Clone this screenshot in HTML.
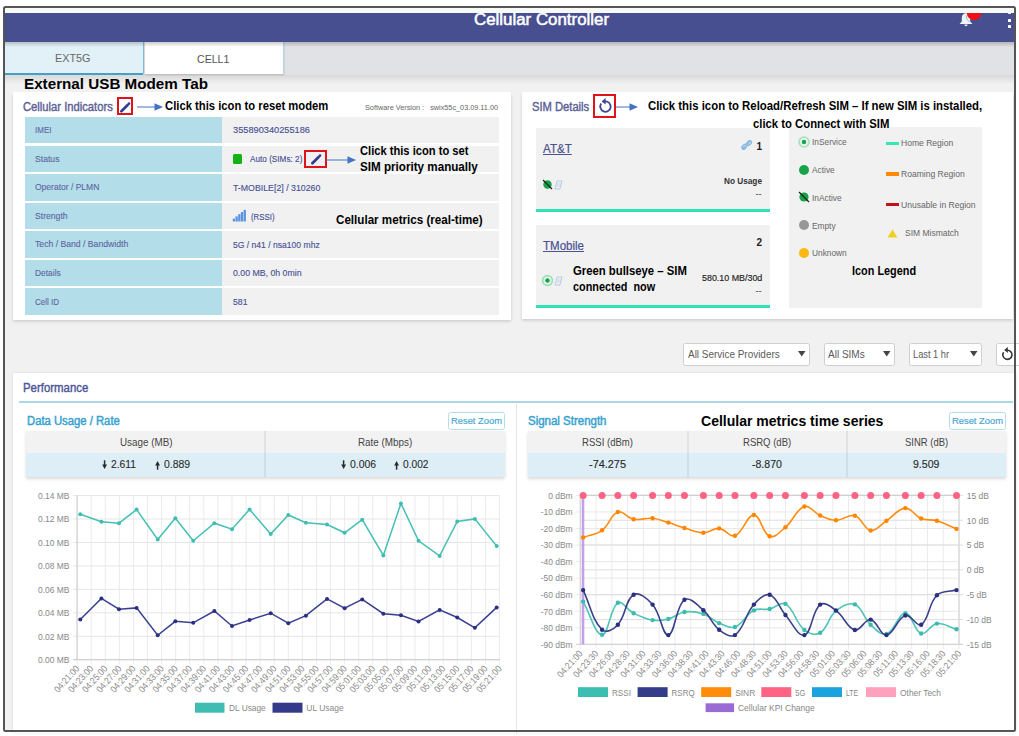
<!DOCTYPE html>
<html><head><meta charset="utf-8">
<style>
*{box-sizing:border-box;margin:0;padding:0}
html,body{width:1019px;height:736px;overflow:hidden;background:#fff;font-family:"Liberation Sans",sans-serif;position:relative}
.a{position:absolute}
.redbox{position:absolute;border:2px solid #e0121a}
.card{position:absolute;background:#fff;box-shadow:0 1.5px 3px rgba(0,0,0,0.16)}
.tx{position:absolute;white-space:nowrap;line-height:normal}
</style></head><body>
<div class="a" style="left:4px;top:7px;width:1011px;height:724px;background:#f1f1f1"></div>
<div class="a" style="left:5px;top:12.5px;width:1010px;height:29.8px;background:#474f91"></div>
<div class="tx" style="left:474.40px;top:11.36px;font-size:15.6px;color:#fff;font-weight:normal;transform:scaleX(1.0818);transform-origin:0 0;-webkit-text-stroke:0.5px #fff;">Cellular Controller</div>
<svg class="a" style="left:958px;top:11px" width="16" height="17" viewBox="0 0 16 17"><path d="M8 2.2 C5 2.2 3.8 4.6 3.8 7.4 L3.8 10.6 L1.6 13 L14.4 13 L12.2 10.6 L12.2 7.4 C12.2 4.6 11 2.2 8 2.2 Z" fill="#eaf6fa"/><path d="M6.4 13.6 A1.6 1.6 0 0 0 9.6 13.6 Z" fill="#eaf6fa"/></svg>
<svg class="a" style="left:964px;top:12.5px" width="20" height="9" viewBox="0 0 20 9"><circle cx="10" cy="0" r="7.2" fill="#f01010"/><path d="M2.2 2.6 A7.6 7.6 0 0 0 17.8 2.6" fill="none" stroke="#5b64a8" stroke-width="0.8" opacity="0.6"/></svg>
<div class="a" style="left:4px;top:7px;width:1011px;height:5.5px;background:#f8f9f9"></div>
<div class="a" style="left:1008px;top:18.5px;width:3px;height:3px;background:#fff;border-radius:0.6px"></div>
<div class="a" style="left:1008px;top:24.5px;width:3px;height:3px;background:#fff;border-radius:0.6px"></div>
<div class="a" style="left:1008px;top:12.5px;width:3px;height:1.5px;background:#e8e8f0"></div>
<div class="a" style="left:5px;top:42px;width:1010px;height:33px;background:#e1e2e6"></div>
<div class="a" style="left:5px;top:42px;width:138.5px;height:32.7px;background:#e2f1f8;border-bottom:2.6px solid #45a0c8;border-right:1.6px solid #7fbcd8;border-bottom-right-radius:2px"></div>
<div class="tx" style="left:55.30px;top:52.10px;font-size:11px;color:#666;font-weight:normal;transform:scaleX(0.9812);transform-origin:0 0;">EXT5G</div>
<div class="a" style="left:144.5px;top:42px;width:139px;height:32px;background:#fff;box-shadow:0 1px 1.5px rgba(0,0,0,0.2);border-right:1px solid #b5d3e2"></div>
<div class="tx" style="left:196.60px;top:53.10px;font-size:11px;color:#555;font-weight:normal;transform:scaleX(0.9631);transform-origin:0 0;">CELL1</div>
<div class="a" style="left:5px;top:42.3px;width:1010px;height:5px;background:linear-gradient(rgba(0,0,0,0.2),rgba(0,0,0,0))"></div>
<div class="a" style="left:5px;top:74.6px;width:1010px;height:9px;background:linear-gradient(rgba(0,0,0,0.1),rgba(0,0,0,0))"></div>
<div class="card" style="left:13px;top:92px;width:498px;height:228px"></div>
<div class="tx" style="left:23.00px;top:99.83px;font-size:12.3px;color:#5b6096;font-weight:normal;transform:scaleX(0.9124);transform-origin:0 0;-webkit-text-stroke:0.4px #5b6096;">Cellular Indicators</div>
<div class="a" style="left:25px;top:117.00px;width:197.3px;height:26.4px;background:#b2dde9"></div>
<div class="a" style="left:222.3px;top:117.00px;width:277px;height:26.4px;background:#f1f1f1"></div>
<div class="tx" style="left:35.20px;top:125.18px;font-size:8.8px;color:#5d66a0;font-weight:normal;transform:scaleX(0.9119);transform-origin:0 0;-webkit-text-stroke:0.1px #5d66a0;">IMEI</div>
<div class="tx" style="left:232.90px;top:124.44px;font-size:9.4px;color:#4a5296;font-weight:normal;transform:scaleX(0.9844);transform-origin:0 0;-webkit-text-stroke:0.15px #4a5296;">355890340255186</div>
<div class="a" style="left:25px;top:145.57px;width:197.3px;height:26.4px;background:#b2dde9"></div>
<div class="a" style="left:222.3px;top:145.57px;width:277px;height:26.4px;background:#f1f1f1"></div>
<div class="tx" style="left:35.20px;top:153.75px;font-size:8.8px;color:#5d66a0;font-weight:normal;transform:scaleX(0.9818);transform-origin:0 0;-webkit-text-stroke:0.1px #5d66a0;">Status</div>
<div class="a" style="left:25px;top:174.14px;width:197.3px;height:26.4px;background:#b2dde9"></div>
<div class="a" style="left:222.3px;top:174.14px;width:277px;height:26.4px;background:#f1f1f1"></div>
<div class="tx" style="left:35.20px;top:182.32px;font-size:8.8px;color:#5d66a0;font-weight:normal;transform:scaleX(0.9669);transform-origin:0 0;-webkit-text-stroke:0.1px #5d66a0;">Operator / PLMN</div>
<div class="tx" style="left:232.90px;top:181.58px;font-size:9.4px;color:#4a5296;font-weight:normal;transform:scaleX(0.9359);transform-origin:0 0;-webkit-text-stroke:0.15px #4a5296;">T-MOBILE[2] / 310260</div>
<div class="a" style="left:25px;top:202.71px;width:197.3px;height:26.4px;background:#b2dde9"></div>
<div class="a" style="left:222.3px;top:202.71px;width:277px;height:26.4px;background:#f1f1f1"></div>
<div class="tx" style="left:35.20px;top:210.89px;font-size:8.8px;color:#5d66a0;font-weight:normal;transform:scaleX(0.9800);transform-origin:0 0;-webkit-text-stroke:0.1px #5d66a0;">Strength</div>
<div class="a" style="left:25px;top:231.28px;width:197.3px;height:26.4px;background:#b2dde9"></div>
<div class="a" style="left:222.3px;top:231.28px;width:277px;height:26.4px;background:#f1f1f1"></div>
<div class="tx" style="left:35.20px;top:239.46px;font-size:8.8px;color:#5d66a0;font-weight:normal;transform:scaleX(0.9823);transform-origin:0 0;-webkit-text-stroke:0.1px #5d66a0;">Tech / Band / Bandwidth</div>
<div class="tx" style="left:232.90px;top:238.72px;font-size:9.4px;color:#4a5296;font-weight:normal;transform:scaleX(0.9140);transform-origin:0 0;-webkit-text-stroke:0.15px #4a5296;">5G / n41 / nsa100 mhz</div>
<div class="a" style="left:25px;top:259.85px;width:197.3px;height:26.4px;background:#b2dde9"></div>
<div class="a" style="left:222.3px;top:259.85px;width:277px;height:26.4px;background:#f1f1f1"></div>
<div class="tx" style="left:35.20px;top:268.03px;font-size:8.8px;color:#5d66a0;font-weight:normal;transform:scaleX(0.9557);transform-origin:0 0;-webkit-text-stroke:0.1px #5d66a0;">Details</div>
<div class="tx" style="left:232.90px;top:267.29px;font-size:9.4px;color:#4a5296;font-weight:normal;transform:scaleX(0.9322);transform-origin:0 0;-webkit-text-stroke:0.15px #4a5296;">0.00 MB, 0h 0min</div>
<div class="a" style="left:25px;top:288.42px;width:197.3px;height:26.4px;background:#b2dde9"></div>
<div class="a" style="left:222.3px;top:288.42px;width:277px;height:26.4px;background:#f1f1f1"></div>
<div class="tx" style="left:35.20px;top:296.60px;font-size:8.8px;color:#5d66a0;font-weight:normal;transform:scaleX(0.9127);transform-origin:0 0;-webkit-text-stroke:0.1px #5d66a0;">Cell ID</div>
<div class="tx" style="left:232.90px;top:295.86px;font-size:9.4px;color:#4a5296;font-weight:normal;transform:scaleX(0.9261);transform-origin:0 0;-webkit-text-stroke:0.15px #4a5296;">581</div>
<div class="redbox" style="left:116.9px;top:96.8px;width:16.5px;height:18.2px"></div>
<svg class="a" style="left:119px;top:100.5px" width="12" height="12" viewBox="0 0 12 12"><path d="M2.4 10.2 L8.4 4.2" stroke="#333d8f" stroke-width="2.7" stroke-linecap="round"/><path d="M9.5 3.1 L10.1 2.5" stroke="#333d8f" stroke-width="2.5" stroke-linecap="round"/></svg>
<svg class="a" style="left:137px;top:101.5px" width="26" height="10" viewBox="0 0 26 10"><line x1="0" y1="5" x2="18" y2="5" stroke="#4472c4" stroke-width="1"/><path d="M17.5 1.2 L26 5 L17.5 8.8 Z" fill="#4472c4"/></svg>
<div class="tx" style="left:364.70px;top:103.63px;font-size:6.3px;color:#666;font-weight:normal;transform:scaleX(1.1561);transform-origin:0 0;">Software Version :&nbsp;&nbsp; swix55c_03.09.11.00</div>
<div class="a" style="left:232.8px;top:154px;width:9.6px;height:9.8px;background:#14b214;border-radius:1.5px"></div>
<div class="tx" style="left:250.00px;top:153.26px;font-size:9.6px;color:#4a5296;font-weight:normal;transform:scaleX(0.8546);transform-origin:0 0;-webkit-text-stroke:0.15px #4a5296;">Auto (SIMs: 2)</div>
<div class="redbox" style="left:303.9px;top:149.5px;width:22.8px;height:18.2px"></div>
<svg class="a" style="left:309.5px;top:152.5px" width="12" height="12" viewBox="0 0 12 12"><path d="M2.4 10.2 L8.4 4.2" stroke="#333d8f" stroke-width="2.7" stroke-linecap="round"/><path d="M9.5 3.1 L10.1 2.5" stroke="#333d8f" stroke-width="2.5" stroke-linecap="round"/></svg>
<svg class="a" style="left:326px;top:155px" width="30" height="10" viewBox="0 0 30 10"><line x1="0" y1="5" x2="22" y2="5" stroke="#4472c4" stroke-width="1"/><path d="M21.5 1.2 L30 5 L21.5 8.8 Z" fill="#4472c4"/></svg>
<svg class="a" style="left:232px;top:209px" width="15" height="13" viewBox="0 0 15 13"><g fill="#5b94e0"><rect x="0.8" y="9.6" width="2.3" height="2.9"/><rect x="3.5" y="7.4" width="2.3" height="5.1"/><rect x="6.2" y="5.2" width="2.3" height="7.3"/><rect x="8.9" y="3" width="2.3" height="9.5"/><rect x="11.6" y="0.8" width="2.3" height="11.7"/></g></svg>
<div class="tx" style="left:250.50px;top:211.36px;font-size:9.6px;color:#4a5296;font-weight:normal;transform:scaleX(0.8165);transform-origin:0 0;-webkit-text-stroke:0.15px #4a5296;">(RSSI)</div>
<div class="card" style="left:521.5px;top:92px;width:491px;height:227px"></div>
<div class="tx" style="left:531.50px;top:99.83px;font-size:12.3px;color:#5b6096;font-weight:normal;transform:scaleX(0.9097);transform-origin:0 0;-webkit-text-stroke:0.4px #5b6096;">SIM Details</div>
<div class="redbox" style="left:593.2px;top:93.8px;width:23.3px;height:23.9px"></div>
<svg class="a" style="left:596px;top:97px" width="18" height="18" viewBox="0 0 18 18"><path d="M5.2 6.6 A5.2 5.2 0 1 0 9 4.4" fill="none" stroke="#3b4594" stroke-width="1.8"/><path d="M9.6 1 L9.6 7.6 L5.6 4.4 Z" fill="#3b4594"/></svg>
<svg class="a" style="left:616px;top:101.5px" width="22" height="10" viewBox="0 0 22 10"><line x1="0" y1="5" x2="14" y2="5" stroke="#4472c4" stroke-width="1"/><path d="M13.5 1.2 L22 5 L13.5 8.8 Z" fill="#4472c4"/></svg>
<div class="a" style="left:536px;top:128px;width:234px;height:84px;background:#f1f1f1;border-bottom:3px solid #30e3b5"></div>
<div class="tx" style="left:542.80px;top:142.40px;font-size:12px;color:#4a5090;font-weight:normal;transform:scaleX(0.9671);transform-origin:0 0;-webkit-text-stroke:0.2px #4a5090;text-decoration:underline">AT&amp;T</div>
<svg class="a" style="left:741px;top:140px" width="12" height="11" viewBox="0 0 12 11"><g fill="none" stroke="#8ab9e0" stroke-width="1.6"><path d="M1.8 8.6 L4.2 6.2 M6.2 4.2 L8.6 1.8"/><rect x="0.8" y="5.2" width="5" height="3.2" rx="1.6" transform="rotate(-45 3.3 6.8)"/><rect x="5.6" y="1.4" width="5" height="3.2" rx="1.6" transform="rotate(-45 8.1 3)"/></g></svg>
<div class="tx" style="left:756.50px;top:140.50px;font-size:10px;color:#222;font-weight:bold;">1</div>
<svg class="a" style="left:542px;top:179px" width="12" height="11" viewBox="0 0 12 11"><circle cx="5.5" cy="5.5" r="4.2" fill="#16a34a"/><line x1="1" y1="1" x2="10" y2="10" stroke="#222" stroke-width="1.2"/></svg>
<svg class="a" style="left:553px;top:180px" width="10" height="10" viewBox="0 0 10 10"><path d="M2 9 L4 1 L9 1 L7 9 Z" fill="none" stroke="#a9c4e0" stroke-width="0.8"/><path d="M3.5 6 L7.5 6 M4 4 L8 4" stroke="#a9c4e0" stroke-width="0.6"/></svg>
<div class="tx" style="left:724.30px;top:176.02px;font-size:9.2px;color:#333;font-weight:bold;transform:scaleX(0.8964);transform-origin:0 0;">No Usage</div>
<div class="tx" style="left:755.50px;top:189.40px;font-size:9px;color:#333;font-weight:normal;">--</div>
<div class="a" style="left:536px;top:224.5px;width:234px;height:83px;background:#f1f1f1;border-bottom:3px solid #30e3b5"></div>
<div class="tx" style="left:542.80px;top:238.80px;font-size:12px;color:#4a5090;font-weight:normal;transform:scaleX(0.9605);transform-origin:0 0;-webkit-text-stroke:0.2px #4a5090;text-decoration:underline">TMobile</div>
<div class="tx" style="left:756.50px;top:237.00px;font-size:10px;color:#222;font-weight:bold;">2</div>
<svg class="a" style="left:541px;top:274px" width="13" height="13" viewBox="0 0 13 13"><circle cx="6.5" cy="6.5" r="5.7" fill="#9fdcb6"/><circle cx="6.5" cy="6.5" r="4" fill="#e6f6ec"/><circle cx="6.5" cy="6.5" r="2.2" fill="#16a34a"/></svg>
<svg class="a" style="left:553px;top:276px" width="10" height="10" viewBox="0 0 10 10"><path d="M2 9 L4 1 L9 1 L7 9 Z" fill="none" stroke="#a9c4e0" stroke-width="0.8"/><path d="M3.5 6 L7.5 6 M4 4 L8 4" stroke="#a9c4e0" stroke-width="0.6"/></svg>
<div class="tx" style="left:702.00px;top:272.70px;font-size:9px;color:#222;font-weight:normal;transform:scaleX(0.9878);transform-origin:0 0;-webkit-text-stroke:0.15px #222;">580.10 MB/30d</div>
<div class="tx" style="left:755.50px;top:285.90px;font-size:9px;color:#333;font-weight:normal;">--</div>
<div class="a" style="left:788.5px;top:126.5px;width:193px;height:181.5px;background:#f1f1f1"></div>
<svg class="a" style="left:796.7px;top:134.9px" width="14" height="14" viewBox="0 0 14 14"><circle cx="7" cy="7" r="5.8" fill="#a6dfbd"/><circle cx="7" cy="7" r="4.2" fill="#e3f5ea"/><circle cx="7" cy="7" r="2.2" fill="#16a34a"/></svg>
<div class="tx" style="left:812.00px;top:137.10px;font-size:9px;color:#666;font-weight:normal;transform:scaleX(0.9250);transform-origin:0 0;">InService</div>
<svg class="a" style="left:796.7px;top:162.8px" width="14" height="14" viewBox="0 0 14 14"><circle cx="7" cy="7" r="5" fill="#16a34a"/></svg>
<div class="tx" style="left:812.00px;top:165.00px;font-size:9px;color:#666;font-weight:normal;transform:scaleX(0.9250);transform-origin:0 0;">Active</div>
<svg class="a" style="left:796.7px;top:190.4px" width="14" height="14" viewBox="0 0 14 14"><circle cx="7" cy="7" r="4.6" fill="#16a34a"/><line x1="2" y1="2" x2="12" y2="12" stroke="#222" stroke-width="1.2"/></svg>
<div class="tx" style="left:812.00px;top:192.60px;font-size:9px;color:#666;font-weight:normal;transform:scaleX(0.9250);transform-origin:0 0;">InActive</div>
<svg class="a" style="left:796.7px;top:218.3px" width="14" height="14" viewBox="0 0 14 14"><circle cx="7" cy="7" r="5" fill="#979797"/></svg>
<div class="tx" style="left:812.00px;top:220.50px;font-size:9px;color:#666;font-weight:normal;transform:scaleX(0.9250);transform-origin:0 0;">Empty</div>
<svg class="a" style="left:796.7px;top:246.1px" width="14" height="14" viewBox="0 0 14 14"><circle cx="7" cy="7" r="5" fill="#fcb912"/></svg>
<div class="tx" style="left:812.00px;top:248.30px;font-size:9px;color:#666;font-weight:normal;transform:scaleX(0.9250);transform-origin:0 0;">Unknown</div>
<div class="a" style="left:886px;top:141.55px;width:13px;height:3.3px;background:#33e8b8"></div>
<div class="tx" style="left:901.20px;top:138.40px;font-size:9px;color:#666;font-weight:normal;transform:scaleX(0.9500);transform-origin:0 0;">Home Region</div>
<div class="a" style="left:886px;top:172.25px;width:13px;height:3.3px;background:#ff8a00"></div>
<div class="tx" style="left:901.20px;top:169.10px;font-size:9px;color:#666;font-weight:normal;transform:scaleX(0.9500);transform-origin:0 0;">Roaming Region</div>
<div class="a" style="left:886px;top:202.85px;width:13px;height:3.3px;background:#c0111f"></div>
<div class="tx" style="left:901.20px;top:199.70px;font-size:9px;color:#666;font-weight:normal;transform:scaleX(0.9500);transform-origin:0 0;">Unusable in Region</div>
<svg class="a" style="left:886.5px;top:229px" width="11" height="9" viewBox="0 0 11 9"><path d="M5.5 0.5 L10.5 8.5 L0.5 8.5 Z" fill="#f2cf1c"/></svg>
<div class="tx" style="left:904.90px;top:228.40px;font-size:9px;color:#666;font-weight:normal;transform:scaleX(0.9436);transform-origin:0 0;">SIM Mismatch</div>
<div class="a" style="left:683px;top:342.5px;width:126.5px;height:23px;background:#fff;border:1px solid #cfcfcf;border-radius:2.5px"></div>
<div class="tx" style="left:687.60px;top:348.25px;font-size:10.5px;color:#5a5a5a;font-weight:normal;transform:scaleX(0.9466);transform-origin:0 0;">All Service Providers</div>
<svg class="a" style="left:797.5px;top:351.2px" width="8" height="6" viewBox="0 0 8 6"><path d="M0 0 L7.5 0 L3.75 5.4 Z" fill="#444"/></svg>
<div class="a" style="left:823.5px;top:342.5px;width:71.0px;height:23px;background:#fff;border:1px solid #cfcfcf;border-radius:2.5px"></div>
<div class="tx" style="left:827.90px;top:348.25px;font-size:10.5px;color:#5a5a5a;font-weight:normal;transform:scaleX(0.9529);transform-origin:0 0;">All SIMs</div>
<svg class="a" style="left:882.5px;top:351.2px" width="8" height="6" viewBox="0 0 8 6"><path d="M0 0 L7.5 0 L3.75 5.4 Z" fill="#444"/></svg>
<div class="a" style="left:908.5px;top:342.5px;width:73.0px;height:23px;background:#fff;border:1px solid #cfcfcf;border-radius:2.5px"></div>
<div class="tx" style="left:913.00px;top:348.25px;font-size:10.5px;color:#5a5a5a;font-weight:normal;transform:scaleX(0.8811);transform-origin:0 0;">Last 1 hr</div>
<svg class="a" style="left:969.5px;top:351.2px" width="8" height="6" viewBox="0 0 8 6"><path d="M0 0 L7.5 0 L3.75 5.4 Z" fill="#444"/></svg>
<div class="a" style="left:995.5px;top:342.5px;width:30px;height:23px;background:#fff;border:1px solid #cfcfcf;border-radius:2.5px"></div>
<svg class="a" style="left:1000px;top:346px" width="14" height="15" viewBox="0 0 14 15"><path d="M3.6 6.2 A4.6 4.6 0 1 0 7.2 4.2" fill="none" stroke="#333" stroke-width="1.6"/><path d="M7.8 1 L7.8 7 L4.2 4.1 Z" fill="#333"/></svg>
<div class="a" style="left:13px;top:372.5px;width:1003px;height:360px;background:#fff;box-shadow:0 0 2px rgba(0,0,0,0.12)"></div>
<div class="tx" style="left:22.80px;top:381.15px;font-size:12.5px;color:#4d559a;font-weight:normal;transform:scaleX(0.9125);transform-origin:0 0;-webkit-text-stroke:0.4px #4d559a;">Performance</div>
<div class="a" style="left:19px;top:401px;width:993.5px;height:1.6px;background:#aad6e6"></div>
<div class="a" style="left:516.3px;top:404px;width:1px;height:330px;background:#e4e4e4"></div>
<div class="tx" style="left:26.60px;top:414.10px;font-size:12px;color:#35a1cf;font-weight:normal;transform:scaleX(0.9400);transform-origin:0 0;-webkit-text-stroke:0.45px #35a1cf;">Data Usage / Rate</div>
<div class="a" style="left:447.5px;top:411.8px;width:57px;height:18.6px;border:1px solid #b7dcec;border-radius:2.5px;background:#fff"></div>
<div class="tx" style="left:450.50px;top:415.45px;font-size:9.5px;color:#4aa7d4;font-weight:normal;transform:scaleX(0.9855);transform-origin:0 0;-webkit-text-stroke:0.2px #4aa7d4;">Reset Zoom</div>
<div class="tx" style="left:528.10px;top:414.30px;font-size:12px;color:#35a1cf;font-weight:normal;transform:scaleX(0.9566);transform-origin:0 0;-webkit-text-stroke:0.45px #35a1cf;">Signal Strength</div>
<div class="a" style="left:949px;top:411.8px;width:57px;height:18.6px;border:1px solid #b7dcec;border-radius:2.5px;background:#fff"></div>
<div class="tx" style="left:952.00px;top:415.45px;font-size:9.5px;color:#4aa7d4;font-weight:normal;transform:scaleX(0.9855);transform-origin:0 0;-webkit-text-stroke:0.2px #4aa7d4;">Reset Zoom</div>
<div class="a" style="left:25.5px;top:430.5px;width:479px;height:46.5px;box-shadow:0 2px 3px rgba(0,0,0,0.15)"></div>
<div class="a" style="left:25.5px;top:430.5px;width:479px;height:22.3px;background:#f2f2f2"></div>
<div class="a" style="left:25.5px;top:452.8px;width:479px;height:24.2px;background:#ddeef6"></div>
<div class="a" style="left:264px;top:430.5px;width:2px;height:46.5px;background:linear-gradient(90deg,rgba(0,0,0,0.03),rgba(0,0,0,0.10),rgba(0,0,0,0.03))"></div>
<div class="tx" style="left:119.70px;top:436.05px;font-size:10.5px;color:#444;font-weight:normal;transform:scaleX(0.9372);transform-origin:0 0;">Usage (MB)</div>
<div class="tx" style="left:357.70px;top:436.05px;font-size:10.5px;color:#444;font-weight:normal;transform:scaleX(0.9383);transform-origin:0 0;">Rate (Mbps)</div>
<svg class="a" style="left:102px;top:460.1px" width="5.2" height="9" viewBox="0 0 5.2 9"><path d="M2.6 0.3 L2.6 5" stroke="#2a2a2a" stroke-width="1.5"/><path d="M0.2 4.6 L5 4.6 L2.6 9 Z" fill="#2a2a2a"/></svg>
<div class="tx" style="left:111.10px;top:458.24px;font-size:11.4px;color:#2a2a2a;font-weight:normal;transform:scaleX(0.9071);transform-origin:0 0;-webkit-text-stroke:0.1px #2a2a2a;">2.611</div>
<svg class="a" style="left:155px;top:460.9px" width="5.2" height="9" viewBox="0 0 5.2 9"><path d="M2.6 8.7 L2.6 4" stroke="#2a2a2a" stroke-width="1.5"/><path d="M0.2 4.4 L5 4.4 L2.6 0 Z" fill="#2a2a2a"/></svg>
<div class="tx" style="left:164.20px;top:458.24px;font-size:11.4px;color:#2a2a2a;font-weight:normal;transform:scaleX(0.9188);transform-origin:0 0;-webkit-text-stroke:0.1px #2a2a2a;">0.889</div>
<svg class="a" style="left:340.6px;top:460.1px" width="5.2" height="9" viewBox="0 0 5.2 9"><path d="M2.6 0.3 L2.6 5" stroke="#2a2a2a" stroke-width="1.5"/><path d="M0.2 4.6 L5 4.6 L2.6 9 Z" fill="#2a2a2a"/></svg>
<div class="tx" style="left:349.80px;top:458.24px;font-size:11.4px;color:#2a2a2a;font-weight:normal;transform:scaleX(0.9153);transform-origin:0 0;-webkit-text-stroke:0.1px #2a2a2a;">0.006</div>
<svg class="a" style="left:394.2px;top:460.9px" width="5.2" height="9" viewBox="0 0 5.2 9"><path d="M2.6 8.7 L2.6 4" stroke="#2a2a2a" stroke-width="1.5"/><path d="M0.2 4.4 L5 4.4 L2.6 0 Z" fill="#2a2a2a"/></svg>
<div class="tx" style="left:403.40px;top:458.24px;font-size:11.4px;color:#2a2a2a;font-weight:normal;transform:scaleX(0.8942);transform-origin:0 0;-webkit-text-stroke:0.1px #2a2a2a;">0.002</div>
<div class="a" style="left:528px;top:430.5px;width:478px;height:46.5px;box-shadow:0 2px 3px rgba(0,0,0,0.15)"></div>
<div class="a" style="left:528px;top:430.5px;width:478px;height:22.7px;background:#f2f2f2"></div>
<div class="a" style="left:528px;top:453.2px;width:478px;height:23.8px;background:#ddeef6"></div>
<div class="a" style="left:686.6px;top:430.5px;width:2px;height:46.5px;background:linear-gradient(90deg,rgba(0,0,0,0.03),rgba(0,0,0,0.10),rgba(0,0,0,0.03))"></div>
<div class="a" style="left:845.6px;top:430.5px;width:2px;height:46.5px;background:linear-gradient(90deg,rgba(0,0,0,0.03),rgba(0,0,0,0.10),rgba(0,0,0,0.03))"></div>
<div class="tx" style="left:582.00px;top:435.85px;font-size:10.5px;color:#444;font-weight:normal;transform:scaleX(0.9105);transform-origin:0 0;">RSSI (dBm)</div>
<div class="tx" style="left:743.00px;top:435.85px;font-size:10.5px;color:#444;font-weight:normal;transform:scaleX(0.9078);transform-origin:0 0;">RSRQ (dB)</div>
<div class="tx" style="left:904.80px;top:435.85px;font-size:10.5px;color:#444;font-weight:normal;transform:scaleX(0.9008);transform-origin:0 0;">SINR (dB)</div>
<div class="tx" style="left:589.40px;top:458.40px;font-size:11px;color:#2a2a2a;font-weight:normal;transform:scaleX(0.9916);transform-origin:0 0;-webkit-text-stroke:0.15px #2a2a2a;">-74.275</div>
<div class="tx" style="left:752.40px;top:458.40px;font-size:11px;color:#2a2a2a;font-weight:normal;transform:scaleX(0.9582);transform-origin:0 0;-webkit-text-stroke:0.15px #2a2a2a;">-8.870</div>
<div class="tx" style="left:913.20px;top:458.40px;font-size:11px;color:#2a2a2a;font-weight:normal;transform:scaleX(0.9589);transform-origin:0 0;-webkit-text-stroke:0.15px #2a2a2a;">9.509</div>
<!--CHARTS-->
<svg class="a" style="left:0;top:0" width="1019" height="736" viewBox="0 0 1019 736" font-family="Liberation Sans, sans-serif">
<line x1="77.1" y1="495.6" x2="77.1" y2="664.68" stroke="#ebebeb" stroke-width="1"/>
<line x1="91.18" y1="495.6" x2="91.18" y2="664.68" stroke="#ebebeb" stroke-width="1"/>
<line x1="105.26" y1="495.6" x2="105.26" y2="664.68" stroke="#ebebeb" stroke-width="1"/>
<line x1="119.34" y1="495.6" x2="119.34" y2="664.68" stroke="#ebebeb" stroke-width="1"/>
<line x1="133.42" y1="495.6" x2="133.42" y2="664.68" stroke="#ebebeb" stroke-width="1"/>
<line x1="147.5" y1="495.6" x2="147.5" y2="664.68" stroke="#ebebeb" stroke-width="1"/>
<line x1="161.58" y1="495.6" x2="161.58" y2="664.68" stroke="#ebebeb" stroke-width="1"/>
<line x1="175.66" y1="495.6" x2="175.66" y2="664.68" stroke="#ebebeb" stroke-width="1"/>
<line x1="189.74" y1="495.6" x2="189.74" y2="664.68" stroke="#ebebeb" stroke-width="1"/>
<line x1="203.82" y1="495.6" x2="203.82" y2="664.68" stroke="#ebebeb" stroke-width="1"/>
<line x1="217.9" y1="495.6" x2="217.9" y2="664.68" stroke="#ebebeb" stroke-width="1"/>
<line x1="231.98" y1="495.6" x2="231.98" y2="664.68" stroke="#ebebeb" stroke-width="1"/>
<line x1="246.06" y1="495.6" x2="246.06" y2="664.68" stroke="#ebebeb" stroke-width="1"/>
<line x1="260.14" y1="495.6" x2="260.14" y2="664.68" stroke="#ebebeb" stroke-width="1"/>
<line x1="274.22" y1="495.6" x2="274.22" y2="664.68" stroke="#ebebeb" stroke-width="1"/>
<line x1="288.3" y1="495.6" x2="288.3" y2="664.68" stroke="#ebebeb" stroke-width="1"/>
<line x1="302.38" y1="495.6" x2="302.38" y2="664.68" stroke="#ebebeb" stroke-width="1"/>
<line x1="316.46" y1="495.6" x2="316.46" y2="664.68" stroke="#ebebeb" stroke-width="1"/>
<line x1="330.54" y1="495.6" x2="330.54" y2="664.68" stroke="#ebebeb" stroke-width="1"/>
<line x1="344.62" y1="495.6" x2="344.62" y2="664.68" stroke="#ebebeb" stroke-width="1"/>
<line x1="358.7" y1="495.6" x2="358.7" y2="664.68" stroke="#ebebeb" stroke-width="1"/>
<line x1="372.78" y1="495.6" x2="372.78" y2="664.68" stroke="#ebebeb" stroke-width="1"/>
<line x1="386.86" y1="495.6" x2="386.86" y2="664.68" stroke="#ebebeb" stroke-width="1"/>
<line x1="400.94" y1="495.6" x2="400.94" y2="664.68" stroke="#ebebeb" stroke-width="1"/>
<line x1="415.02" y1="495.6" x2="415.02" y2="664.68" stroke="#ebebeb" stroke-width="1"/>
<line x1="429.1" y1="495.6" x2="429.1" y2="664.68" stroke="#ebebeb" stroke-width="1"/>
<line x1="443.18" y1="495.6" x2="443.18" y2="664.68" stroke="#ebebeb" stroke-width="1"/>
<line x1="457.26" y1="495.6" x2="457.26" y2="664.68" stroke="#ebebeb" stroke-width="1"/>
<line x1="471.34" y1="495.6" x2="471.34" y2="664.68" stroke="#ebebeb" stroke-width="1"/>
<line x1="485.42" y1="495.6" x2="485.42" y2="664.68" stroke="#ebebeb" stroke-width="1"/>
<line x1="499.5" y1="495.6" x2="499.5" y2="664.68" stroke="#ebebeb" stroke-width="1"/>
<line x1="73.1" y1="495.6" x2="499.5" y2="495.6" stroke="#e6e6e6" stroke-width="1"/>
<line x1="73.1" y1="519.04" x2="499.5" y2="519.04" stroke="#e6e6e6" stroke-width="1"/>
<line x1="73.1" y1="542.48" x2="499.5" y2="542.48" stroke="#e6e6e6" stroke-width="1"/>
<line x1="73.1" y1="565.92" x2="499.5" y2="565.92" stroke="#e6e6e6" stroke-width="1"/>
<line x1="73.1" y1="589.36" x2="499.5" y2="589.36" stroke="#e6e6e6" stroke-width="1"/>
<line x1="73.1" y1="612.8" x2="499.5" y2="612.8" stroke="#e6e6e6" stroke-width="1"/>
<line x1="73.1" y1="636.24" x2="499.5" y2="636.24" stroke="#e6e6e6" stroke-width="1"/>
<line x1="73.1" y1="659.68" x2="499.5" y2="659.68" stroke="#e6e6e6" stroke-width="1"/>
<line x1="77.1" y1="495.6" x2="77.1" y2="659.68" stroke="#cfcfcf" stroke-width="1.2"/>
<line x1="73.1" y1="659.68" x2="499.5" y2="659.68" stroke="#cfcfcf" stroke-width="1.2"/>
<text transform="translate(69.5 498.9) scale(0.91 1)" font-size="9.3" fill="#888" text-anchor="end">0.14 MB</text>
<text transform="translate(69.5 522.34) scale(0.91 1)" font-size="9.3" fill="#888" text-anchor="end">0.12 MB</text>
<text transform="translate(69.5 545.78) scale(0.91 1)" font-size="9.3" fill="#888" text-anchor="end">0.10 MB</text>
<text transform="translate(69.5 569.22) scale(0.91 1)" font-size="9.3" fill="#888" text-anchor="end">0.08 MB</text>
<text transform="translate(69.5 592.66) scale(0.91 1)" font-size="9.3" fill="#888" text-anchor="end">0.06 MB</text>
<text transform="translate(69.5 616.1) scale(0.91 1)" font-size="9.3" fill="#888" text-anchor="end">0.04 MB</text>
<text transform="translate(69.5 639.54) scale(0.91 1)" font-size="9.3" fill="#888" text-anchor="end">0.02 MB</text>
<text transform="translate(69.5 662.98) scale(0.91 1)" font-size="9.3" fill="#888" text-anchor="end">0.00 MB</text>
<text transform="translate(79.9 669) rotate(-48) scale(0.88 1)" font-size="9.5" fill="#888" text-anchor="end">04:21:00</text>
<text transform="translate(93.98 669) rotate(-48) scale(0.88 1)" font-size="9.5" fill="#888" text-anchor="end">04:23:00</text>
<text transform="translate(108.06 669) rotate(-48) scale(0.88 1)" font-size="9.5" fill="#888" text-anchor="end">04:25:00</text>
<text transform="translate(122.14 669) rotate(-48) scale(0.88 1)" font-size="9.5" fill="#888" text-anchor="end">04:27:00</text>
<text transform="translate(136.22 669) rotate(-48) scale(0.88 1)" font-size="9.5" fill="#888" text-anchor="end">04:29:00</text>
<text transform="translate(150.3 669) rotate(-48) scale(0.88 1)" font-size="9.5" fill="#888" text-anchor="end">04:31:00</text>
<text transform="translate(164.38 669) rotate(-48) scale(0.88 1)" font-size="9.5" fill="#888" text-anchor="end">04:33:00</text>
<text transform="translate(178.46 669) rotate(-48) scale(0.88 1)" font-size="9.5" fill="#888" text-anchor="end">04:35:00</text>
<text transform="translate(192.54 669) rotate(-48) scale(0.88 1)" font-size="9.5" fill="#888" text-anchor="end">04:37:00</text>
<text transform="translate(206.62 669) rotate(-48) scale(0.88 1)" font-size="9.5" fill="#888" text-anchor="end">04:39:00</text>
<text transform="translate(220.7 669) rotate(-48) scale(0.88 1)" font-size="9.5" fill="#888" text-anchor="end">04:41:00</text>
<text transform="translate(234.78 669) rotate(-48) scale(0.88 1)" font-size="9.5" fill="#888" text-anchor="end">04:43:00</text>
<text transform="translate(248.86 669) rotate(-48) scale(0.88 1)" font-size="9.5" fill="#888" text-anchor="end">04:45:00</text>
<text transform="translate(262.94 669) rotate(-48) scale(0.88 1)" font-size="9.5" fill="#888" text-anchor="end">04:47:00</text>
<text transform="translate(277.02 669) rotate(-48) scale(0.88 1)" font-size="9.5" fill="#888" text-anchor="end">04:49:00</text>
<text transform="translate(291.1 669) rotate(-48) scale(0.88 1)" font-size="9.5" fill="#888" text-anchor="end">04:51:00</text>
<text transform="translate(305.18 669) rotate(-48) scale(0.88 1)" font-size="9.5" fill="#888" text-anchor="end">04:53:00</text>
<text transform="translate(319.26 669) rotate(-48) scale(0.88 1)" font-size="9.5" fill="#888" text-anchor="end">04:55:00</text>
<text transform="translate(333.34 669) rotate(-48) scale(0.88 1)" font-size="9.5" fill="#888" text-anchor="end">04:57:00</text>
<text transform="translate(347.42 669) rotate(-48) scale(0.88 1)" font-size="9.5" fill="#888" text-anchor="end">04:59:00</text>
<text transform="translate(361.5 669) rotate(-48) scale(0.88 1)" font-size="9.5" fill="#888" text-anchor="end">05:01:00</text>
<text transform="translate(375.58 669) rotate(-48) scale(0.88 1)" font-size="9.5" fill="#888" text-anchor="end">05:03:00</text>
<text transform="translate(389.66 669) rotate(-48) scale(0.88 1)" font-size="9.5" fill="#888" text-anchor="end">05:05:00</text>
<text transform="translate(403.74 669) rotate(-48) scale(0.88 1)" font-size="9.5" fill="#888" text-anchor="end">05:07:00</text>
<text transform="translate(417.82 669) rotate(-48) scale(0.88 1)" font-size="9.5" fill="#888" text-anchor="end">05:09:00</text>
<text transform="translate(431.9 669) rotate(-48) scale(0.88 1)" font-size="9.5" fill="#888" text-anchor="end">05:11:00</text>
<text transform="translate(445.98 669) rotate(-48) scale(0.88 1)" font-size="9.5" fill="#888" text-anchor="end">05:13:00</text>
<text transform="translate(460.06 669) rotate(-48) scale(0.88 1)" font-size="9.5" fill="#888" text-anchor="end">05:15:00</text>
<text transform="translate(474.14 669) rotate(-48) scale(0.88 1)" font-size="9.5" fill="#888" text-anchor="end">05:17:00</text>
<text transform="translate(488.22 669) rotate(-48) scale(0.88 1)" font-size="9.5" fill="#888" text-anchor="end">05:19:00</text>
<text transform="translate(502.3 669) rotate(-48) scale(0.88 1)" font-size="9.5" fill="#888" text-anchor="end">05:21:00</text>
<polyline points="80.27,514.2 101.39,521.7 118.99,523.2 136.59,509.6 157.71,539.5 175.31,518.2 193.26,540.8 214.38,523.2 231.98,529.2 249.58,509.4 270.7,534 288.3,515 305.9,522.7 327.02,524.5 344.62,532.8 362.22,519.7 383.34,555.4 400.94,503.4 418.54,540.8 439.66,555.9 457.26,521.5 474.86,518.9 496.68,546.1" fill="none" stroke="#45c0b5" stroke-width="1.5"/>
<circle cx="80.27" cy="514.2" r="2" fill="#3fbdb2"/>
<circle cx="101.39" cy="521.7" r="2" fill="#3fbdb2"/>
<circle cx="118.99" cy="523.2" r="2" fill="#3fbdb2"/>
<circle cx="136.59" cy="509.6" r="2" fill="#3fbdb2"/>
<circle cx="157.71" cy="539.5" r="2" fill="#3fbdb2"/>
<circle cx="175.31" cy="518.2" r="2" fill="#3fbdb2"/>
<circle cx="193.26" cy="540.8" r="2" fill="#3fbdb2"/>
<circle cx="214.38" cy="523.2" r="2" fill="#3fbdb2"/>
<circle cx="231.98" cy="529.2" r="2" fill="#3fbdb2"/>
<circle cx="249.58" cy="509.4" r="2" fill="#3fbdb2"/>
<circle cx="270.7" cy="534" r="2" fill="#3fbdb2"/>
<circle cx="288.3" cy="515" r="2" fill="#3fbdb2"/>
<circle cx="305.9" cy="522.7" r="2" fill="#3fbdb2"/>
<circle cx="327.02" cy="524.5" r="2" fill="#3fbdb2"/>
<circle cx="344.62" cy="532.8" r="2" fill="#3fbdb2"/>
<circle cx="362.22" cy="519.7" r="2" fill="#3fbdb2"/>
<circle cx="383.34" cy="555.4" r="2" fill="#3fbdb2"/>
<circle cx="400.94" cy="503.4" r="2" fill="#3fbdb2"/>
<circle cx="418.54" cy="540.8" r="2" fill="#3fbdb2"/>
<circle cx="439.66" cy="555.9" r="2" fill="#3fbdb2"/>
<circle cx="457.26" cy="521.5" r="2" fill="#3fbdb2"/>
<circle cx="474.86" cy="518.9" r="2" fill="#3fbdb2"/>
<circle cx="496.68" cy="546.1" r="2" fill="#3fbdb2"/>
<polyline points="80.27,619.5 101.39,598.4 118.99,609.2 136.59,607.9 157.71,635.3 175.31,621.3 193.26,622.8 214.38,611 231.98,626 249.58,620 270.7,613.2 288.3,623.2 305.9,615.7 327.02,598.9 344.62,608.2 362.22,599.4 383.34,613.7 400.94,615.2 418.54,621.5 439.66,609.9 457.26,617.5 474.86,627.8 496.68,607.4" fill="none" stroke="#3a4090" stroke-width="1.5"/>
<circle cx="80.27" cy="619.5" r="2" fill="#2a2f80"/>
<circle cx="101.39" cy="598.4" r="2" fill="#2a2f80"/>
<circle cx="118.99" cy="609.2" r="2" fill="#2a2f80"/>
<circle cx="136.59" cy="607.9" r="2" fill="#2a2f80"/>
<circle cx="157.71" cy="635.3" r="2" fill="#2a2f80"/>
<circle cx="175.31" cy="621.3" r="2" fill="#2a2f80"/>
<circle cx="193.26" cy="622.8" r="2" fill="#2a2f80"/>
<circle cx="214.38" cy="611" r="2" fill="#2a2f80"/>
<circle cx="231.98" cy="626" r="2" fill="#2a2f80"/>
<circle cx="249.58" cy="620" r="2" fill="#2a2f80"/>
<circle cx="270.7" cy="613.2" r="2" fill="#2a2f80"/>
<circle cx="288.3" cy="623.2" r="2" fill="#2a2f80"/>
<circle cx="305.9" cy="615.7" r="2" fill="#2a2f80"/>
<circle cx="327.02" cy="598.9" r="2" fill="#2a2f80"/>
<circle cx="344.62" cy="608.2" r="2" fill="#2a2f80"/>
<circle cx="362.22" cy="599.4" r="2" fill="#2a2f80"/>
<circle cx="383.34" cy="613.7" r="2" fill="#2a2f80"/>
<circle cx="400.94" cy="615.2" r="2" fill="#2a2f80"/>
<circle cx="418.54" cy="621.5" r="2" fill="#2a2f80"/>
<circle cx="439.66" cy="609.9" r="2" fill="#2a2f80"/>
<circle cx="457.26" cy="617.5" r="2" fill="#2a2f80"/>
<circle cx="474.86" cy="627.8" r="2" fill="#2a2f80"/>
<circle cx="496.68" cy="607.4" r="2" fill="#2a2f80"/>
<rect x="195" y="702.7" width="29.5" height="10" fill="#3fbdb2"/>
<text x="229" y="711.2" font-size="9.5" fill="#888" textLength="36.7" lengthAdjust="spacingAndGlyphs">DL Usage</text>
<rect x="272.5" y="702.7" width="30" height="10" fill="#343a8a"/>
<text x="306.3" y="711.2" font-size="9.5" fill="#888" textLength="37.3" lengthAdjust="spacingAndGlyphs">UL Usage</text>
<line x1="580.3" y1="495.4" x2="580.3" y2="649.35" stroke="#ebebeb" stroke-width="1"/>
<line x1="596.08" y1="495.4" x2="596.08" y2="649.35" stroke="#ebebeb" stroke-width="1"/>
<line x1="611.86" y1="495.4" x2="611.86" y2="649.35" stroke="#ebebeb" stroke-width="1"/>
<line x1="627.64" y1="495.4" x2="627.64" y2="649.35" stroke="#ebebeb" stroke-width="1"/>
<line x1="643.42" y1="495.4" x2="643.42" y2="649.35" stroke="#ebebeb" stroke-width="1"/>
<line x1="659.2" y1="495.4" x2="659.2" y2="649.35" stroke="#ebebeb" stroke-width="1"/>
<line x1="674.98" y1="495.4" x2="674.98" y2="649.35" stroke="#ebebeb" stroke-width="1"/>
<line x1="690.76" y1="495.4" x2="690.76" y2="649.35" stroke="#ebebeb" stroke-width="1"/>
<line x1="706.54" y1="495.4" x2="706.54" y2="649.35" stroke="#ebebeb" stroke-width="1"/>
<line x1="722.32" y1="495.4" x2="722.32" y2="649.35" stroke="#ebebeb" stroke-width="1"/>
<line x1="738.1" y1="495.4" x2="738.1" y2="649.35" stroke="#ebebeb" stroke-width="1"/>
<line x1="753.88" y1="495.4" x2="753.88" y2="649.35" stroke="#ebebeb" stroke-width="1"/>
<line x1="769.66" y1="495.4" x2="769.66" y2="649.35" stroke="#ebebeb" stroke-width="1"/>
<line x1="785.44" y1="495.4" x2="785.44" y2="649.35" stroke="#ebebeb" stroke-width="1"/>
<line x1="801.22" y1="495.4" x2="801.22" y2="649.35" stroke="#ebebeb" stroke-width="1"/>
<line x1="817" y1="495.4" x2="817" y2="649.35" stroke="#ebebeb" stroke-width="1"/>
<line x1="832.78" y1="495.4" x2="832.78" y2="649.35" stroke="#ebebeb" stroke-width="1"/>
<line x1="848.56" y1="495.4" x2="848.56" y2="649.35" stroke="#ebebeb" stroke-width="1"/>
<line x1="864.34" y1="495.4" x2="864.34" y2="649.35" stroke="#ebebeb" stroke-width="1"/>
<line x1="880.12" y1="495.4" x2="880.12" y2="649.35" stroke="#ebebeb" stroke-width="1"/>
<line x1="895.9" y1="495.4" x2="895.9" y2="649.35" stroke="#ebebeb" stroke-width="1"/>
<line x1="911.68" y1="495.4" x2="911.68" y2="649.35" stroke="#ebebeb" stroke-width="1"/>
<line x1="927.46" y1="495.4" x2="927.46" y2="649.35" stroke="#ebebeb" stroke-width="1"/>
<line x1="943.24" y1="495.4" x2="943.24" y2="649.35" stroke="#ebebeb" stroke-width="1"/>
<line x1="959.02" y1="495.4" x2="959.02" y2="649.35" stroke="#ebebeb" stroke-width="1"/>
<line x1="576.3" y1="495.4" x2="959.02" y2="495.4" stroke="#e8e8e8" stroke-width="1"/>
<line x1="576.3" y1="511.95" x2="959.02" y2="511.95" stroke="#e8e8e8" stroke-width="1"/>
<line x1="576.3" y1="528.5" x2="959.02" y2="528.5" stroke="#e8e8e8" stroke-width="1"/>
<line x1="576.3" y1="545.05" x2="959.02" y2="545.05" stroke="#e8e8e8" stroke-width="1"/>
<line x1="576.3" y1="561.6" x2="959.02" y2="561.6" stroke="#e8e8e8" stroke-width="1"/>
<line x1="576.3" y1="578.15" x2="959.02" y2="578.15" stroke="#e8e8e8" stroke-width="1"/>
<line x1="576.3" y1="594.7" x2="959.02" y2="594.7" stroke="#e8e8e8" stroke-width="1"/>
<line x1="576.3" y1="611.25" x2="959.02" y2="611.25" stroke="#e8e8e8" stroke-width="1"/>
<line x1="576.3" y1="627.8" x2="959.02" y2="627.8" stroke="#e8e8e8" stroke-width="1"/>
<line x1="576.3" y1="644.35" x2="959.02" y2="644.35" stroke="#e8e8e8" stroke-width="1"/>
<line x1="580.3" y1="495.4" x2="963.02" y2="495.4" stroke="#dedede" stroke-width="1"/>
<line x1="580.3" y1="520.23" x2="963.02" y2="520.23" stroke="#dedede" stroke-width="1"/>
<line x1="580.3" y1="545.06" x2="963.02" y2="545.06" stroke="#dedede" stroke-width="1"/>
<line x1="580.3" y1="569.89" x2="963.02" y2="569.89" stroke="#dedede" stroke-width="1"/>
<line x1="580.3" y1="594.72" x2="963.02" y2="594.72" stroke="#dedede" stroke-width="1"/>
<line x1="580.3" y1="619.55" x2="963.02" y2="619.55" stroke="#dedede" stroke-width="1"/>
<line x1="580.3" y1="644.38" x2="963.02" y2="644.38" stroke="#dedede" stroke-width="1"/>
<line x1="580.3" y1="495.4" x2="580.3" y2="644.35" stroke="#d5d5d5" stroke-width="1.2"/>
<line x1="959.02" y1="495.4" x2="959.02" y2="644.35" stroke="#d5d5d5" stroke-width="1.2"/>
<line x1="576.3" y1="644.35" x2="963.02" y2="644.35" stroke="#d5d5d5" stroke-width="1.2"/>
<line x1="580.3" y1="495.4" x2="959.02" y2="495.4" stroke="#cfcfcf" stroke-width="1.2"/>
<text transform="translate(572.6 498.7) scale(0.91 1)" font-size="9.3" fill="#888" text-anchor="end">0 dBm</text>
<text transform="translate(572.6 515.25) scale(0.91 1)" font-size="9.3" fill="#888" text-anchor="end">-10 dBm</text>
<text transform="translate(572.6 531.8) scale(0.91 1)" font-size="9.3" fill="#888" text-anchor="end">-20 dBm</text>
<text transform="translate(572.6 548.35) scale(0.91 1)" font-size="9.3" fill="#888" text-anchor="end">-30 dBm</text>
<text transform="translate(572.6 564.9) scale(0.91 1)" font-size="9.3" fill="#888" text-anchor="end">-40 dBm</text>
<text transform="translate(572.6 581.45) scale(0.91 1)" font-size="9.3" fill="#888" text-anchor="end">-50 dBm</text>
<text transform="translate(572.6 598) scale(0.91 1)" font-size="9.3" fill="#888" text-anchor="end">-60 dBm</text>
<text transform="translate(572.6 614.55) scale(0.91 1)" font-size="9.3" fill="#888" text-anchor="end">-70 dBm</text>
<text transform="translate(572.6 631.1) scale(0.91 1)" font-size="9.3" fill="#888" text-anchor="end">-80 dBm</text>
<text transform="translate(572.6 647.65) scale(0.91 1)" font-size="9.3" fill="#888" text-anchor="end">-90 dBm</text>
<text transform="translate(966.7 498.7) scale(0.91 1)" font-size="9.3" fill="#888">15 dB</text>
<text transform="translate(966.7 523.53) scale(0.91 1)" font-size="9.3" fill="#888">10 dB</text>
<text transform="translate(966.7 548.36) scale(0.91 1)" font-size="9.3" fill="#888">5 dB</text>
<text transform="translate(966.7 573.19) scale(0.91 1)" font-size="9.3" fill="#888">0 dB</text>
<text transform="translate(966.7 598.02) scale(0.91 1)" font-size="9.3" fill="#888">-5 dB</text>
<text transform="translate(966.7 622.85) scale(0.91 1)" font-size="9.3" fill="#888">-10 dB</text>
<text transform="translate(966.7 647.68) scale(0.91 1)" font-size="9.3" fill="#888">-15 dB</text>
<text transform="translate(583.1 654) rotate(-48) scale(0.88 1)" font-size="9.5" fill="#888" text-anchor="end">04:21:00</text>
<text transform="translate(598.88 654) rotate(-48) scale(0.88 1)" font-size="9.5" fill="#888" text-anchor="end">04:23:30</text>
<text transform="translate(614.66 654) rotate(-48) scale(0.88 1)" font-size="9.5" fill="#888" text-anchor="end">04:26:00</text>
<text transform="translate(630.44 654) rotate(-48) scale(0.88 1)" font-size="9.5" fill="#888" text-anchor="end">04:28:30</text>
<text transform="translate(646.22 654) rotate(-48) scale(0.88 1)" font-size="9.5" fill="#888" text-anchor="end">04:31:00</text>
<text transform="translate(662 654) rotate(-48) scale(0.88 1)" font-size="9.5" fill="#888" text-anchor="end">04:33:30</text>
<text transform="translate(677.78 654) rotate(-48) scale(0.88 1)" font-size="9.5" fill="#888" text-anchor="end">04:36:00</text>
<text transform="translate(693.56 654) rotate(-48) scale(0.88 1)" font-size="9.5" fill="#888" text-anchor="end">04:38:30</text>
<text transform="translate(709.34 654) rotate(-48) scale(0.88 1)" font-size="9.5" fill="#888" text-anchor="end">04:41:00</text>
<text transform="translate(725.12 654) rotate(-48) scale(0.88 1)" font-size="9.5" fill="#888" text-anchor="end">04:43:30</text>
<text transform="translate(740.9 654) rotate(-48) scale(0.88 1)" font-size="9.5" fill="#888" text-anchor="end">04:46:00</text>
<text transform="translate(756.68 654) rotate(-48) scale(0.88 1)" font-size="9.5" fill="#888" text-anchor="end">04:48:30</text>
<text transform="translate(772.46 654) rotate(-48) scale(0.88 1)" font-size="9.5" fill="#888" text-anchor="end">04:51:00</text>
<text transform="translate(788.24 654) rotate(-48) scale(0.88 1)" font-size="9.5" fill="#888" text-anchor="end">04:53:30</text>
<text transform="translate(804.02 654) rotate(-48) scale(0.88 1)" font-size="9.5" fill="#888" text-anchor="end">04:56:00</text>
<text transform="translate(819.8 654) rotate(-48) scale(0.88 1)" font-size="9.5" fill="#888" text-anchor="end">04:58:30</text>
<text transform="translate(835.58 654) rotate(-48) scale(0.88 1)" font-size="9.5" fill="#888" text-anchor="end">05:01:00</text>
<text transform="translate(851.36 654) rotate(-48) scale(0.88 1)" font-size="9.5" fill="#888" text-anchor="end">05:03:30</text>
<text transform="translate(867.14 654) rotate(-48) scale(0.88 1)" font-size="9.5" fill="#888" text-anchor="end">05:06:00</text>
<text transform="translate(882.92 654) rotate(-48) scale(0.88 1)" font-size="9.5" fill="#888" text-anchor="end">05:08:30</text>
<text transform="translate(898.7 654) rotate(-48) scale(0.88 1)" font-size="9.5" fill="#888" text-anchor="end">05:11:00</text>
<text transform="translate(914.48 654) rotate(-48) scale(0.88 1)" font-size="9.5" fill="#888" text-anchor="end">05:13:30</text>
<text transform="translate(930.26 654) rotate(-48) scale(0.88 1)" font-size="9.5" fill="#888" text-anchor="end">05:16:00</text>
<text transform="translate(946.04 654) rotate(-48) scale(0.88 1)" font-size="9.5" fill="#888" text-anchor="end">05:18:30</text>
<text transform="translate(961.82 654) rotate(-48) scale(0.88 1)" font-size="9.5" fill="#888" text-anchor="end">05:21:00</text>
<line x1="583" y1="495.4" x2="583" y2="644.35" stroke="#c3a0ea" stroke-width="2.6"/>
<path d="M583.14 537.4 C590.71 534.56 595.75 534.93 602.08 530.3 C609.64 524.77 610.51 514.58 617.86 512 C623.13 510.14 627 518 633.64 519.2 C640.89 520.52 645.12 517.57 652.57 518.3 C659 518.93 662.1 520.7 668.35 522.6 C674.85 524.58 677.93 526.1 684.45 528 C691.95 530.18 695.83 532.71 703.38 532.8 C709.72 532.87 713.05 527.82 719.16 528.4 C725.67 529.02 729.63 537.85 734.94 535.8 C743.52 532.49 746.73 514.9 753.88 515 C760.62 515.1 762.17 533.38 769.66 536.3 C774.79 538.3 779.99 531.98 785.44 527.3 C793.88 520.06 795.94 509.37 804.38 506.5 C809.83 504.65 813.54 512.61 820.16 515.5 C826.16 518.13 829.57 520.26 835.94 520.3 C843.46 520.34 848.29 513.77 854.87 515.7 C862.18 517.85 863.85 529.4 870.65 530.5 C876.47 531.44 880.21 524.82 886.43 520.8 C894.09 515.86 897.78 508.6 905.37 508.1 C911.66 507.68 914.3 515.74 921.15 518.5 C926.93 520.82 930.85 519.01 936.93 520.8 C944.99 523.17 948.67 525.66 956.5 528.9" fill="none" stroke="#ff8c0e" stroke-width="1.6"/>
<circle cx="583.14" cy="537.4" r="2.2" fill="#ff8400"/>
<circle cx="602.08" cy="530.3" r="2.2" fill="#ff8400"/>
<circle cx="617.86" cy="512" r="2.2" fill="#ff8400"/>
<circle cx="633.64" cy="519.2" r="2.2" fill="#ff8400"/>
<circle cx="652.57" cy="518.3" r="2.2" fill="#ff8400"/>
<circle cx="668.35" cy="522.6" r="2.2" fill="#ff8400"/>
<circle cx="684.45" cy="528" r="2.2" fill="#ff8400"/>
<circle cx="703.38" cy="532.8" r="2.2" fill="#ff8400"/>
<circle cx="719.16" cy="528.4" r="2.2" fill="#ff8400"/>
<circle cx="734.94" cy="535.8" r="2.2" fill="#ff8400"/>
<circle cx="753.88" cy="515" r="2.2" fill="#ff8400"/>
<circle cx="769.66" cy="536.3" r="2.2" fill="#ff8400"/>
<circle cx="785.44" cy="527.3" r="2.2" fill="#ff8400"/>
<circle cx="804.38" cy="506.5" r="2.2" fill="#ff8400"/>
<circle cx="820.16" cy="515.5" r="2.2" fill="#ff8400"/>
<circle cx="835.94" cy="520.3" r="2.2" fill="#ff8400"/>
<circle cx="854.87" cy="515.7" r="2.2" fill="#ff8400"/>
<circle cx="870.65" cy="530.5" r="2.2" fill="#ff8400"/>
<circle cx="886.43" cy="520.8" r="2.2" fill="#ff8400"/>
<circle cx="905.37" cy="508.1" r="2.2" fill="#ff8400"/>
<circle cx="921.15" cy="518.5" r="2.2" fill="#ff8400"/>
<circle cx="936.93" cy="520.8" r="2.2" fill="#ff8400"/>
<circle cx="956.5" cy="528.9" r="2.2" fill="#ff8400"/>
<path d="M583.14 601.6 C590.71 614.84 594.89 634.45 602.08 634.7 C608.78 634.93 609.61 608.42 617.86 602.8 C622.23 599.82 626.92 609.85 633.64 613.2 C640.8 616.77 644.79 618.8 652.57 620.1 C658.68 621.12 662.31 620.54 668.35 619 C675.06 617.3 677.72 612.98 684.45 612 C691.74 610.94 696.3 611.63 703.38 613.9 C710.18 616.07 712.48 620.33 719.16 623.1 C725.11 625.57 729.5 628.99 734.94 627 C743.38 623.91 745.36 614.82 753.88 610.4 C759.24 607.62 763.49 610.27 769.66 609 C776.12 607.67 780.72 601.05 785.44 603.9 C794.61 609.45 795.1 622.28 804.38 630 C808.99 633.84 815.45 635.65 820.16 632.8 C828.08 628.01 827.96 617.42 835.94 610.9 C841.85 606.06 848.79 601.98 854.87 604.4 C862.68 607.5 863.28 617.79 870.65 624.7 C875.9 629.63 880.96 635.81 886.43 634 C894.84 631.21 898.11 613.3 905.37 613.2 C912 613.1 913.83 631.09 921.15 633.5 C926.45 635.25 930.18 624.4 936.93 623.6 C944.31 622.72 948.67 627.02 956.5 629.3" fill="none" stroke="#4cc4b7" stroke-width="1.6"/>
<circle cx="583.14" cy="601.6" r="2.2" fill="#3dbcae"/>
<circle cx="602.08" cy="634.7" r="2.2" fill="#3dbcae"/>
<circle cx="617.86" cy="602.8" r="2.2" fill="#3dbcae"/>
<circle cx="633.64" cy="613.2" r="2.2" fill="#3dbcae"/>
<circle cx="652.57" cy="620.1" r="2.2" fill="#3dbcae"/>
<circle cx="668.35" cy="619" r="2.2" fill="#3dbcae"/>
<circle cx="684.45" cy="612" r="2.2" fill="#3dbcae"/>
<circle cx="703.38" cy="613.9" r="2.2" fill="#3dbcae"/>
<circle cx="719.16" cy="623.1" r="2.2" fill="#3dbcae"/>
<circle cx="734.94" cy="627" r="2.2" fill="#3dbcae"/>
<circle cx="753.88" cy="610.4" r="2.2" fill="#3dbcae"/>
<circle cx="769.66" cy="609" r="2.2" fill="#3dbcae"/>
<circle cx="785.44" cy="603.9" r="2.2" fill="#3dbcae"/>
<circle cx="804.38" cy="630" r="2.2" fill="#3dbcae"/>
<circle cx="820.16" cy="632.8" r="2.2" fill="#3dbcae"/>
<circle cx="835.94" cy="610.9" r="2.2" fill="#3dbcae"/>
<circle cx="854.87" cy="604.4" r="2.2" fill="#3dbcae"/>
<circle cx="870.65" cy="624.7" r="2.2" fill="#3dbcae"/>
<circle cx="886.43" cy="634" r="2.2" fill="#3dbcae"/>
<circle cx="905.37" cy="613.2" r="2.2" fill="#3dbcae"/>
<circle cx="921.15" cy="633.5" r="2.2" fill="#3dbcae"/>
<circle cx="936.93" cy="623.6" r="2.2" fill="#3dbcae"/>
<circle cx="956.5" cy="629.3" r="2.2" fill="#3dbcae"/>
<path d="M583.14 590.1 C590.71 605.98 591.99 619.75 602.08 629.8 C605.88 633.59 613.71 629.31 617.86 624.7 C626.33 615.27 625.12 599.63 633.64 594.7 C639.01 591.59 647.25 598.4 652.57 604.6 C661.13 614.56 662.37 636 668.35 635.1 C675.12 634.08 675.45 606.2 684.45 599.8 C689.46 596.24 696.97 604.66 703.38 610.2 C710.86 616.66 711.57 623.81 719.16 629.8 C724.19 633.77 730.54 638.29 734.94 635.1 C744.43 628.21 744.74 615.24 753.88 604.6 C758.62 599.08 764.36 592.95 769.66 594.7 C776.98 597.11 778.74 607.21 785.44 615 C792.63 623.37 798.19 636.95 804.38 635.1 C812.07 632.79 811.68 611.23 820.16 604.6 C824.31 601.35 830.64 606.52 835.94 610.4 C844.52 616.68 846.67 627.83 854.87 630 C860.56 631.51 864.84 618.66 870.65 619.6 C877.46 620.7 880.21 635.83 886.43 635.1 C894.1 634.19 897.05 617.99 905.37 615.5 C910.94 613.83 916.69 627.57 921.15 624.7 C929.31 619.45 928.12 603.83 936.93 595.2 C942.25 589.99 948.67 592.14 956.5 590.1" fill="none" stroke="#3a4089" stroke-width="1.6"/>
<circle cx="583.14" cy="590.1" r="2.2" fill="#2a2f7e"/>
<circle cx="602.08" cy="629.8" r="2.2" fill="#2a2f7e"/>
<circle cx="617.86" cy="624.7" r="2.2" fill="#2a2f7e"/>
<circle cx="633.64" cy="594.7" r="2.2" fill="#2a2f7e"/>
<circle cx="652.57" cy="604.6" r="2.2" fill="#2a2f7e"/>
<circle cx="668.35" cy="635.1" r="2.2" fill="#2a2f7e"/>
<circle cx="684.45" cy="599.8" r="2.2" fill="#2a2f7e"/>
<circle cx="703.38" cy="610.2" r="2.2" fill="#2a2f7e"/>
<circle cx="719.16" cy="629.8" r="2.2" fill="#2a2f7e"/>
<circle cx="734.94" cy="635.1" r="2.2" fill="#2a2f7e"/>
<circle cx="753.88" cy="604.6" r="2.2" fill="#2a2f7e"/>
<circle cx="769.66" cy="594.7" r="2.2" fill="#2a2f7e"/>
<circle cx="785.44" cy="615" r="2.2" fill="#2a2f7e"/>
<circle cx="804.38" cy="635.1" r="2.2" fill="#2a2f7e"/>
<circle cx="820.16" cy="604.6" r="2.2" fill="#2a2f7e"/>
<circle cx="835.94" cy="610.4" r="2.2" fill="#2a2f7e"/>
<circle cx="854.87" cy="630" r="2.2" fill="#2a2f7e"/>
<circle cx="870.65" cy="619.6" r="2.2" fill="#2a2f7e"/>
<circle cx="886.43" cy="635.1" r="2.2" fill="#2a2f7e"/>
<circle cx="905.37" cy="615.5" r="2.2" fill="#2a2f7e"/>
<circle cx="921.15" cy="624.7" r="2.2" fill="#2a2f7e"/>
<circle cx="936.93" cy="595.2" r="2.2" fill="#2a2f7e"/>
<circle cx="956.5" cy="590.1" r="2.2" fill="#2a2f7e"/>
<circle cx="583.14" cy="495.4" r="3.5" fill="#ff6384"/>
<circle cx="602.08" cy="495.4" r="3.5" fill="#ff6384"/>
<circle cx="617.86" cy="495.4" r="3.5" fill="#ff6384"/>
<circle cx="633.64" cy="495.4" r="3.5" fill="#ff6384"/>
<circle cx="652.57" cy="495.4" r="3.5" fill="#ff6384"/>
<circle cx="668.35" cy="495.4" r="3.5" fill="#ff6384"/>
<circle cx="684.45" cy="495.4" r="3.5" fill="#ff6384"/>
<circle cx="703.38" cy="495.4" r="3.5" fill="#ff6384"/>
<circle cx="719.16" cy="495.4" r="3.5" fill="#ff6384"/>
<circle cx="734.94" cy="495.4" r="3.5" fill="#ff6384"/>
<circle cx="753.88" cy="495.4" r="3.5" fill="#ff6384"/>
<circle cx="769.66" cy="495.4" r="3.5" fill="#ff6384"/>
<circle cx="785.44" cy="495.4" r="3.5" fill="#ff6384"/>
<circle cx="804.38" cy="495.4" r="3.5" fill="#ff6384"/>
<circle cx="820.16" cy="495.4" r="3.5" fill="#ff6384"/>
<circle cx="835.94" cy="495.4" r="3.5" fill="#ff6384"/>
<circle cx="854.87" cy="495.4" r="3.5" fill="#ff6384"/>
<circle cx="870.65" cy="495.4" r="3.5" fill="#ff6384"/>
<circle cx="886.43" cy="495.4" r="3.5" fill="#ff6384"/>
<circle cx="905.37" cy="495.4" r="3.5" fill="#ff6384"/>
<circle cx="921.15" cy="495.4" r="3.5" fill="#ff6384"/>
<circle cx="936.93" cy="495.4" r="3.5" fill="#ff6384"/>
<circle cx="956.5" cy="495.4" r="3.5" fill="#ff6384"/>
<rect x="578" y="687.2" width="30" height="9.8" fill="#3cbfb1"/>
<text x="612" y="695.6" font-size="9.5" fill="#888" textLength="19" lengthAdjust="spacingAndGlyphs">RSSI</text>
<rect x="637.6" y="687.2" width="30" height="9.8" fill="#343d89"/>
<text x="671.6" y="695.6" font-size="9.5" fill="#888" textLength="23" lengthAdjust="spacingAndGlyphs">RSRQ</text>
<rect x="701.2" y="687.2" width="30" height="9.8" fill="#ff8c0a"/>
<text x="735.2" y="695.6" font-size="9.5" fill="#888" textLength="20" lengthAdjust="spacingAndGlyphs">SINR</text>
<rect x="761.3" y="687.2" width="30" height="9.8" fill="#ff6384"/>
<text x="795.3" y="695.6" font-size="9.5" fill="#888" textLength="10" lengthAdjust="spacingAndGlyphs">5G</text>
<rect x="812" y="687.2" width="30" height="9.8" fill="#1aa3dd"/>
<text x="846" y="695.6" font-size="9.5" fill="#888" textLength="12" lengthAdjust="spacingAndGlyphs">LTE</text>
<rect x="866" y="687.2" width="30" height="9.8" fill="#ffa0bd"/>
<text x="900" y="695.6" font-size="9.5" fill="#888" textLength="41" lengthAdjust="spacingAndGlyphs">Other Tech</text>
<rect x="705.6" y="703.3" width="28.5" height="8.8" fill="#9a6bd4"/>
<text x="738" y="711.2" font-size="9.5" fill="#888" textLength="76.7" lengthAdjust="spacingAndGlyphs">Cellular KPI Change</text>
</svg>
<!--/CHARTS-->
<div class="tx" style="left:24.40px;top:75.89px;font-size:14.9px;color:#000;font-weight:bold;transform:scaleX(1.0216);transform-origin:0 0;">External USB Modem Tab</div>
<div class="tx" style="left:165.30px;top:98.48px;font-size:12.8px;color:#000;font-weight:bold;transform:scaleX(0.8803);transform-origin:0 0;">Click this icon to reset modem</div>
<div class="tx" style="left:360.20px;top:143.74px;font-size:12.4px;color:#000;font-weight:bold;transform:scaleX(0.8996);transform-origin:0 0;">Click this icon to set</div>
<div class="tx" style="left:360.20px;top:160.04px;font-size:12.4px;color:#000;font-weight:bold;transform:scaleX(0.9400);transform-origin:0 0;">SIM priority manually</div>
<div class="tx" style="left:335.60px;top:213.00px;font-size:12px;color:#000;font-weight:bold;transform:scaleX(0.9684);transform-origin:0 0;">Cellular metrics (real-time)</div>
<div class="tx" style="left:648.00px;top:99.02px;font-size:12.2px;color:#000;font-weight:bold;transform:scaleX(0.9328);transform-origin:0 0;">Click this icon to Reload/Refresh SIM &ndash; If new SIM is installed,</div>
<div class="tx" style="left:753.00px;top:116.72px;font-size:12.2px;color:#000;font-weight:bold;transform:scaleX(0.9282);transform-origin:0 0;">click to Connect with SIM</div>
<div class="tx" style="left:572.60px;top:264.05px;font-size:12.5px;color:#000;font-weight:bold;transform:scaleX(0.9050);transform-origin:0 0;">Green bullseye &ndash; SIM</div>
<div class="tx" style="left:572.60px;top:280.15px;font-size:12.5px;color:#000;font-weight:bold;transform:scaleX(0.8703);transform-origin:0 0;">connected&nbsp; now</div>
<div class="tx" style="left:851.90px;top:263.65px;font-size:12.5px;color:#000;font-weight:bold;transform:scaleX(0.8706);transform-origin:0 0;">Icon Legend</div>
<div class="tx" style="left:701.30px;top:413.37px;font-size:14.7px;color:#000;font-weight:bold;transform:scaleX(0.9547);transform-origin:0 0;">Cellular metrics time series</div>
<div class="a" style="left:3.25px;top:6.05px;width:1012.75px;height:725.7px;border:2px solid #555;border-radius:2.5px;pointer-events:none"></div>
</body></html>
